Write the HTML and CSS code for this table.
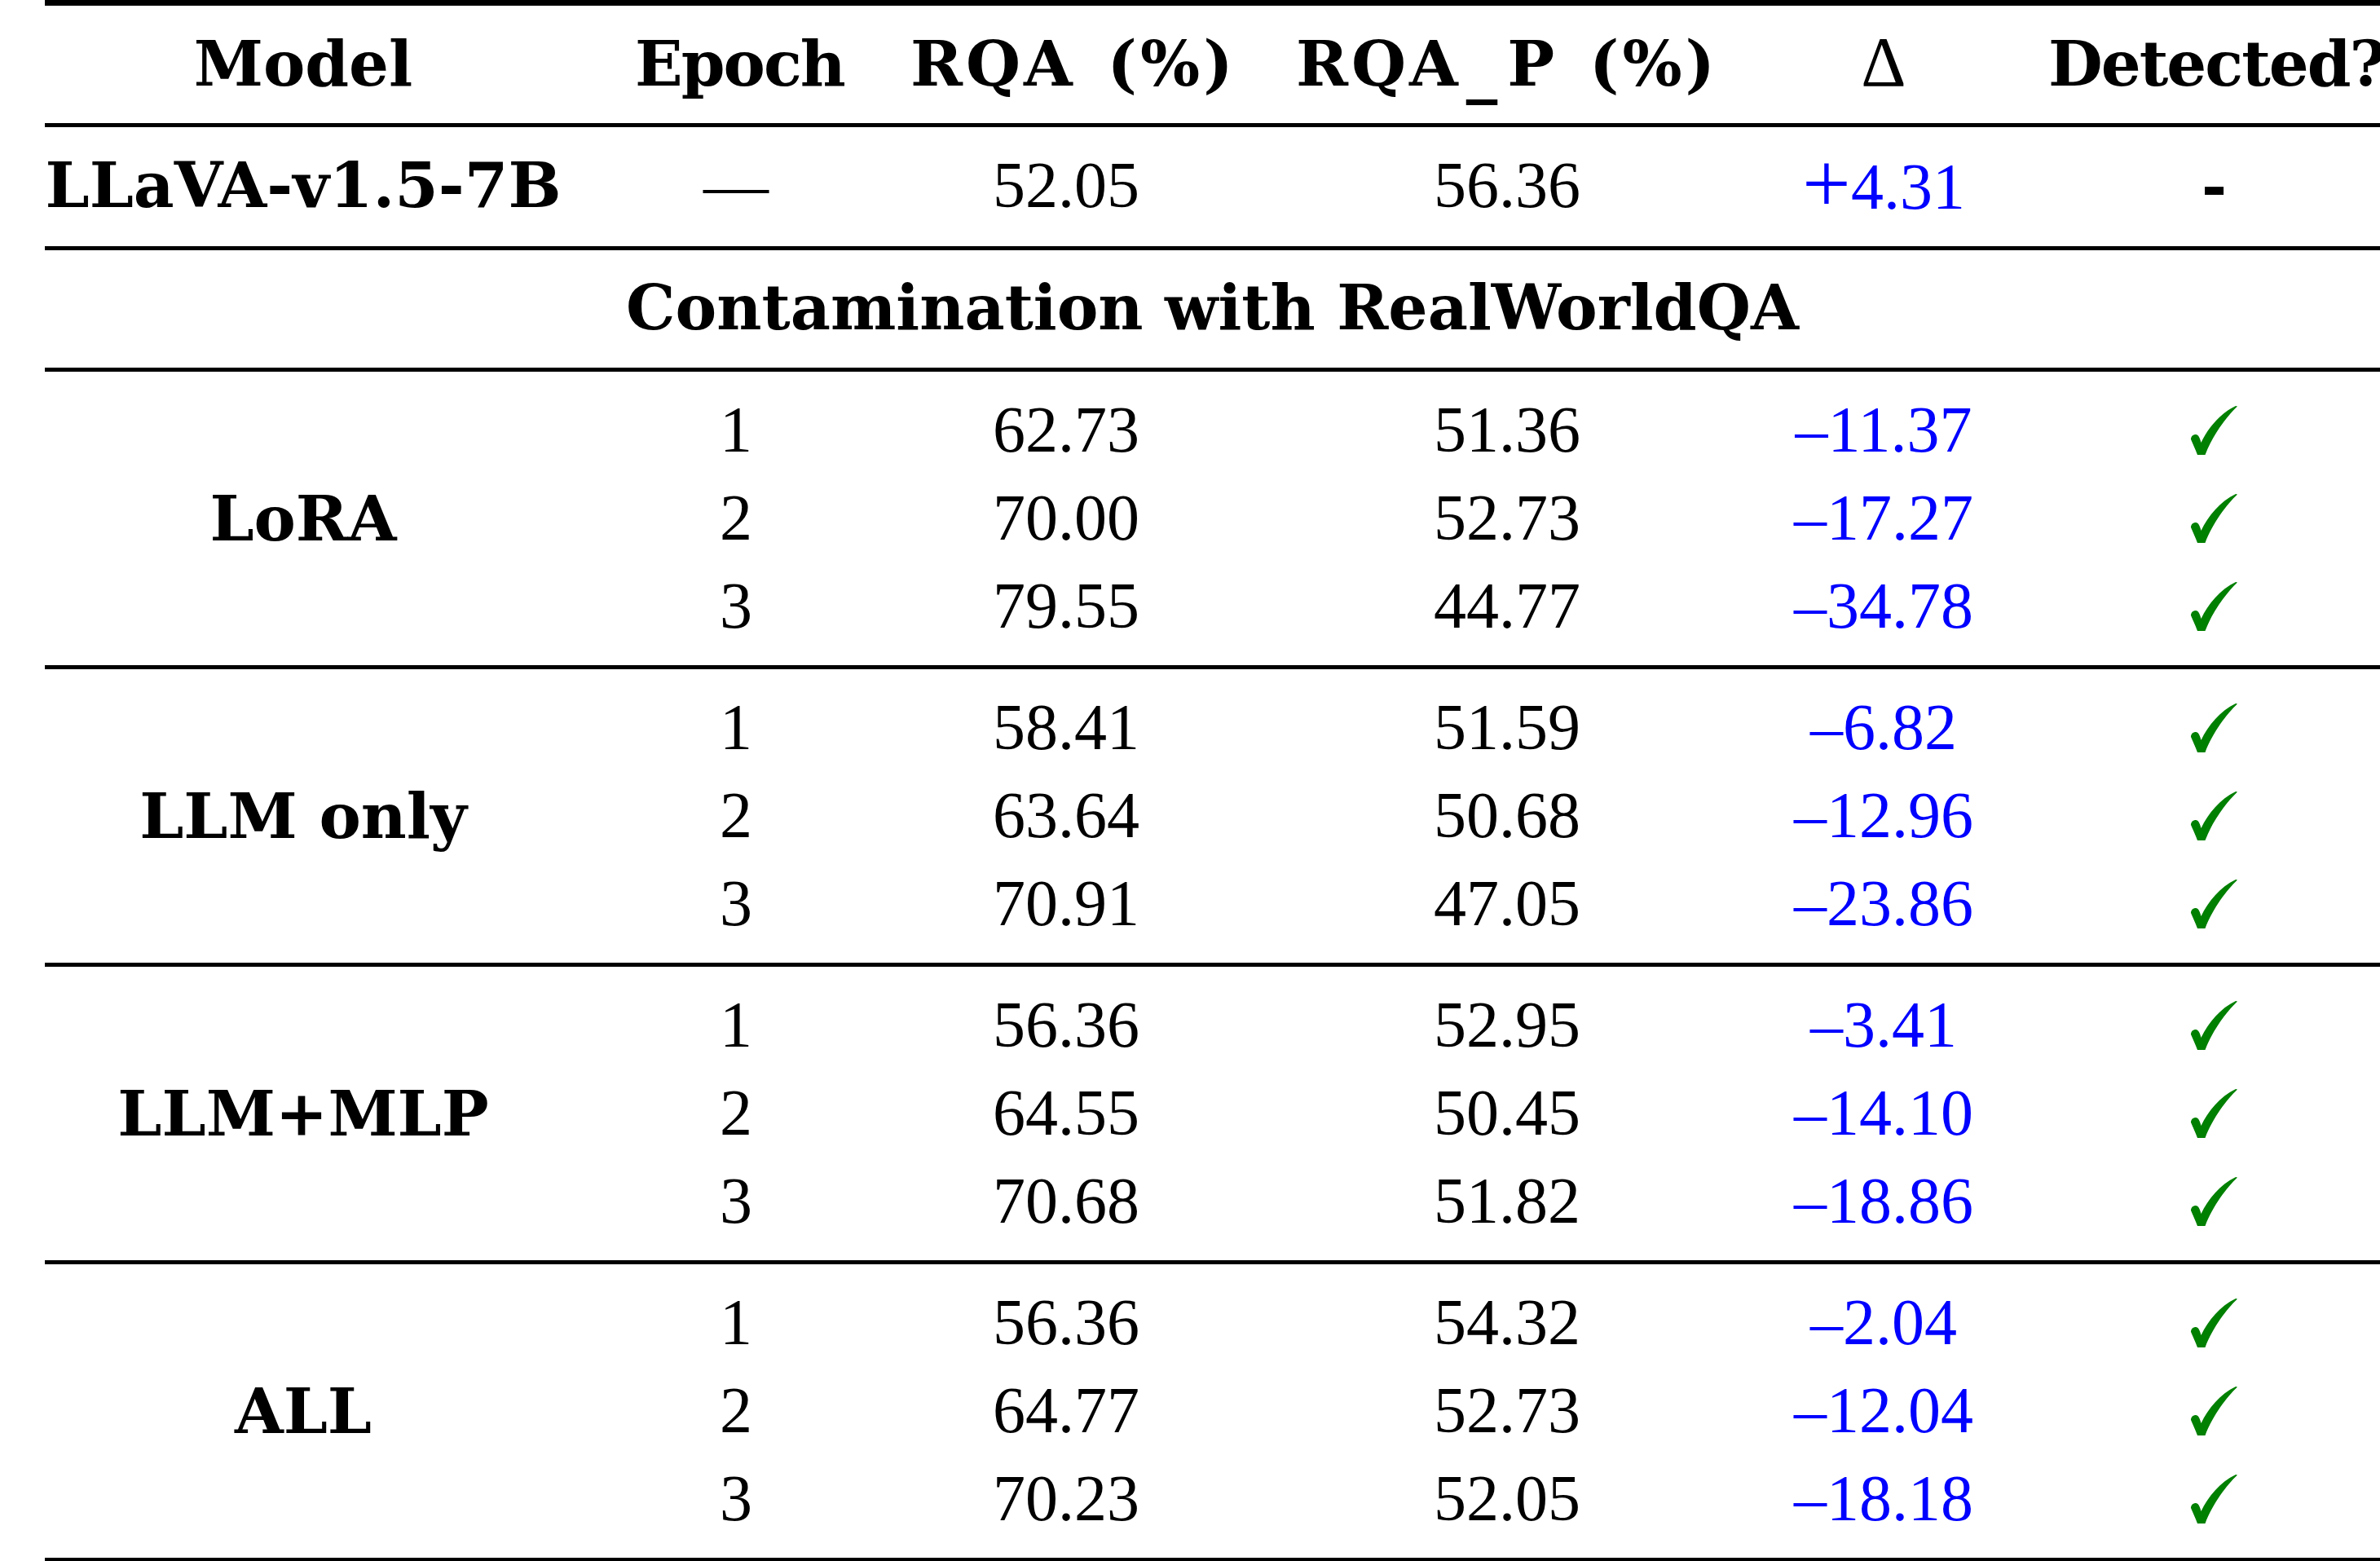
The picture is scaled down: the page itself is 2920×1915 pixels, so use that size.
FILE: index.html
```html
<!DOCTYPE html>
<html lang="en">
<head>
<meta charset="utf-8">
<title>Contamination detection results</title>
<link rel="stylesheet" href="styles.css">
</head>
<body>
<svg class="defs" width="0" height="0" aria-hidden="true">
  <symbol id="chk" viewBox="0 0 57 60">
    <path d="M0 41 C0 37 3 35 6 35 C9 35 11 39 12.5 45 C21 27 36 9 55 0 L57 0.5 C44 13 27 35 17.5 60 L8 60 C5.5 53 2.5 47 0 41 Z"/>
  </symbol>
</svg>
<div class="page">
<table class="results">
  <colgroup>
    <col class="c1"><col class="c2"><col class="c3"><col class="c4"><col class="c5"><col class="c6">
  </colgroup>
  <thead>
    <tr class="single top">
      <th class="m">Model</th>
      <th class="epoch">Epoch</th>
      <th class="pct">RQA (%)</th>
      <th class="pct">RQA<span class="us">_</span>P (%)</th>
      <th class="reg"><span class="delta">Δ</span></th>
      <th class="d det">Detected?</th>
    </tr>
  </thead>
  <tbody>
    <tr class="single">
      <th class="m">LLaVA-v1.5-7B</th>
      <td>—</td>
      <td>52.05</td>
      <td>56.36</td>
      <td class="val"><span class="plus">+</span>4.31</td>
      <td class="d"><b class="dash">-</b></td>
    </tr>
    <tr class="single">
      <th class="section" colspan="6">Contamination with RealWorldQA</th>
    </tr>
  </tbody>
  <tbody class="group">
    <tr class="first">
      <th class="m grp" rowspan="3">LoRA</th>
      <td>1</td><td>62.73</td><td>51.36</td><td class="val">–11.37</td>
      <td class="d"><svg class="check"><use href="#chk"/></svg></td>
    </tr>
    <tr>
      <td>2</td><td>70.00</td><td>52.73</td><td class="val">–17.27</td>
      <td class="d"><svg class="check"><use href="#chk"/></svg></td>
    </tr>
    <tr class="last">
      <td>3</td><td>79.55</td><td>44.77</td><td class="val">–34.78</td>
      <td class="d"><svg class="check"><use href="#chk"/></svg></td>
    </tr>
  </tbody>
  <tbody class="group">
    <tr class="first">
      <th class="m grp" rowspan="3">LLM only</th>
      <td>1</td><td>58.41</td><td>51.59</td><td class="val">–6.82</td>
      <td class="d"><svg class="check"><use href="#chk"/></svg></td>
    </tr>
    <tr>
      <td>2</td><td>63.64</td><td>50.68</td><td class="val">–12.96</td>
      <td class="d"><svg class="check"><use href="#chk"/></svg></td>
    </tr>
    <tr class="last">
      <td>3</td><td>70.91</td><td>47.05</td><td class="val">–23.86</td>
      <td class="d"><svg class="check"><use href="#chk"/></svg></td>
    </tr>
  </tbody>
  <tbody class="group">
    <tr class="first">
      <th class="m grp" rowspan="3">LLM+MLP</th>
      <td>1</td><td>56.36</td><td>52.95</td><td class="val">–3.41</td>
      <td class="d"><svg class="check"><use href="#chk"/></svg></td>
    </tr>
    <tr>
      <td>2</td><td>64.55</td><td>50.45</td><td class="val">–14.10</td>
      <td class="d"><svg class="check"><use href="#chk"/></svg></td>
    </tr>
    <tr class="last">
      <td>3</td><td>70.68</td><td>51.82</td><td class="val">–18.86</td>
      <td class="d"><svg class="check"><use href="#chk"/></svg></td>
    </tr>
  </tbody>
  <tbody class="group final">
    <tr class="first">
      <th class="m grp" rowspan="3">ALL</th>
      <td>1</td><td>56.36</td><td>54.32</td><td class="val">–2.04</td>
      <td class="d"><svg class="check"><use href="#chk"/></svg></td>
    </tr>
    <tr>
      <td>2</td><td>64.77</td><td>52.73</td><td class="val">–12.04</td>
      <td class="d"><svg class="check"><use href="#chk"/></svg></td>
    </tr>
    <tr class="last">
      <td>3</td><td>70.23</td><td>52.05</td><td class="val">–18.18</td>
      <td class="d"><svg class="check"><use href="#chk"/></svg></td>
    </tr>
  </tbody>
</table>
</div>
</body>
</html>
```

FILE: styles.css
```css
html, body {
  margin: 0;
  padding: 0;
  background: #ffffff;
  overflow: hidden;
}

.defs {
  position: absolute;
  width: 0;
  height: 0;
}

.page {
  padding-left: 55px;
}

.results {
  table-layout: fixed;
  width: 2865px;
  border-collapse: separate;
  border-spacing: 0;
  color: #000000;
  font-family: "Liberation Serif", "Times New Roman", serif;
  font-size: 80px;
  line-height: 108px;
}

.c1 { width: 679px; }
.c2 { width: 338px; }
.c3 { width: 472px; }
.c4 { width: 610px; }
.c5 { width: 314px; }
.c6 { width: 452px; }

.results th,
.results td {
  padding: 0 45px;
  text-align: center;
  vertical-align: top;
  white-space: nowrap;
}

.results th {
  font-family: "DejaVu Serif", serif;
  font-weight: bold;
  font-size: 77px;
}

.results th.reg {
  font-family: "Liberation Serif", serif;
  font-weight: normal;
  font-size: 80px;
}

.results th.pct {
  letter-spacing: 4px;
  word-spacing: 8px;
}

.results th.epoch {
  letter-spacing: -2px;
}

.results th.det {
  letter-spacing: -2px;
}

.us {
  display: inline-block;
  margin: 0 8px 0 6px;
  transform: translateY(6px);
}

.delta {
  font-size: 86px;
  line-height: 1;
}

.results .m { padding-left: 0; }
.results .d { padding-right: 0; }

.results th.section {
  font-size: 76px;
  padding: 17px 0 19px;
}

/* rows that stand alone between two rules */
.single > th,
.single > td {
  padding-top: 17px;
  padding-bottom: 19px;
  border-bottom: 5px solid #000;
}

.top > th {
  border-top: 7px solid #000;
}

/* three-row groups */
.group .first > td { padding-top: 17px; }
.group .last > td {
  padding-bottom: 19px;
  border-bottom: 5px solid #000;
}

.results th.grp {
  padding-top: 0;
  padding-bottom: 0;
  vertical-align: middle;
  border-bottom: 5px solid #000;
}

.final .last > td,
.final th.grp {
  border-bottom-width: 7px;
}

.val {
  color: #0000ff;
}

.plus {
  font-size: 106px;
  line-height: 1;
  vertical-align: -5px;
}

.dash {
  font-family: "DejaVu Serif", serif;
  font-size: 75px;
  line-height: 1;
}

.check {
  width: 57px;
  height: 60px;
  vertical-align: -4px;
  fill: #008000;
}
```
